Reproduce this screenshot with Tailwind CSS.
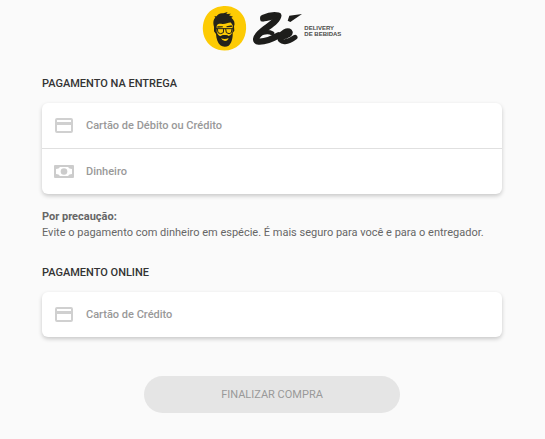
<!DOCTYPE html>
<html lang="pt-BR">
<head>
    <meta charset="UTF-8">
    <meta name="viewport" content="width=device-width, initial-scale=1.0">
    <title>Zé Delivery - Pagamento</title>
    <script src="https://cdn.jsdelivr.net/npm/@tailwindcss/browser@4"></script>
</head>
<body class="min-h-screen bg-[#fafafa] font-['Roboto',sans-serif] text-[11px] leading-4 text-[#666]">

    <!-- Logo -->
    <header class="flex justify-center">
        <svg class="h-14 w-[155px]" viewBox="0 0 465 168" role="img" aria-label="Zé Delivery de Bebidas">
            <path fill="#fdcb04" d="M86 18C112 16 139 31 148 54C159 80 153 116 133 134C117 150 92 155 70 149C44 142 26 119 24 94C21 68 31 42 51 29C62 22 73 19 86 18Z"/>
            <!-- Hair and beard -->
            <path fill="#24231b" d="M57 80C53 66 56 57 61 53L58 49L65 49C67 43 76 38 85 40L98 36L94 42L108 41L102 46L114 50L109 53C118 60 121 70 117 79L118 92L113 99C114 115 109 131 101 137C94 142 82 141 76 136C68 129 64 116 63 102L57 94Z"/>
            <path fill="#fdcb04" d="M65 78C68 70 75 71 82 72C92 73 102 66 108 68L113 76L112 97C108 105 105 107 101 108C96 104 82 104 76 109C70 106 67 101 65 95Z"/>
            <path fill="none" stroke="#24231b" stroke-width="3" d="M61 86H115M67 86L69 98Q77 104 85 98L86 86M92 86L94 98Q103 104 109 98L111 86"/>
            <path fill="#24231b" d="M67 79L83 79L84 82L67 83ZM94 79L110 76L111 81L95 82ZM74 112C80 106 86 106 89 108C94 105 99 106 104 111L98 115H80Z"/>
            <path fill="#fdcb04" d="M78 115Q90 119 101 114Q98 123 90 123Q81 122 78 115Z"/>
            <!-- Wordmark -->
            <g fill="none" stroke="#1d1d1b" stroke-linecap="round" stroke-linejoin="round">
                <path stroke-width="19" d="M205 54C218 48 236 44 250 47C248 64 216 80 195 99C182 112 179 124 191 125C208 126 230 118 251 106"/>
                <path stroke-width="13" d="M202 58C216 56 228 54 240 50M192 103C207 96 222 95 232 100"/>
                <path stroke-width="15" d="M260 111C276 111 290 100 285 95C277 88 260 98 256 109C252 119 259 126 270 125C284 124 292 118 300 112"/>
            </g>
            <path fill="#1d1d1b" d="M321 42L283 47L278 62L286 66Z"/>
            <text x="328" y="89" font-family="Liberation Sans, sans-serif" font-size="18" font-weight="700" fill="#4a4a48">DELIVERY</text>
            <text x="328" y="109" font-family="Liberation Sans, sans-serif" font-size="18" font-weight="700" fill="#4a4a48">DE BEBIDAS</text>
        </svg>
    </header>

    <main class="pt-5 pr-[43px] pb-6 pl-[42px]">

        <!-- Pay on delivery -->
        <section>
            <h2 class="mb-[11px] font-medium text-[#333]">PAGAMENTO NA ENTREGA</h2>
            <div class="overflow-hidden rounded-md bg-white shadow-[0_2px_4px_rgba(0,0,0,0.2)]">
                <button type="button" class="flex h-[46px] w-full items-center gap-3 border-b border-[#e0e0e0] px-3 text-left font-medium text-[#999]">
                    <svg class="w-5" viewBox="0 0 20 16" fill="none" aria-hidden="true">
                        <rect x="2" y="1" width="16" height="13" rx="1" stroke="#d0d0d0" stroke-width="2"/>
                        <path fill="#d0d0d0" d="M2 4H18V7H2Z"/>
                    </svg>
                    <span>Cartão de Débito ou Crédito</span>
                </button>
                <button type="button" class="flex h-[45px] w-full items-center gap-3 px-3 text-left font-medium text-[#999]">
                    <svg class="w-5" viewBox="0 0 20 14" aria-hidden="true">
                        <rect width="20" height="13" rx="1" fill="#ccc"/>
                        <path fill="#fff" d="M6 2H14Q15 4 18 4V9Q15 9 14 11H6Q5 9 2 9V4Q5 4 6 2Z"/>
                        <circle cx="10" cy="6.5" r="3.3" fill="#ccc"/>
                    </svg>
                    <span>Dinheiro</span>
                </button>
            </div>
            <p class="mt-[15px]">
                <strong class="block font-bold">Por precaução:</strong>
                Evite o pagamento com dinheiro em espécie. É mais seguro para você e para o entregador.
            </p>
        </section>

        <!-- Pay online -->
        <section class="mt-6">
            <h2 class="mb-[11px] font-medium text-[#333]">PAGAMENTO ONLINE</h2>
            <div class="overflow-hidden rounded-md bg-white shadow-[0_2px_4px_rgba(0,0,0,0.2)]">
                <button type="button" class="flex h-[45px] w-full items-center gap-3 px-3 text-left font-medium text-[#999]">
                    <svg class="w-5" viewBox="0 0 20 16" fill="none" aria-hidden="true">
                        <rect x="2" y="1" width="16" height="13" rx="1" stroke="#d0d0d0" stroke-width="2"/>
                        <path fill="#d0d0d0" d="M2 4H18V7H2Z"/>
                    </svg>
                    <span>Cartão de Crédito</span>
                </button>
            </div>
        </section>

        <div class="mt-[39px] flex justify-center">
            <button type="submit" disabled class="h-[37px] w-64 rounded-full bg-[#e5e5e5] text-[#999]">FINALIZAR COMPRA</button>
        </div>
    </main>

</body>
</html>
